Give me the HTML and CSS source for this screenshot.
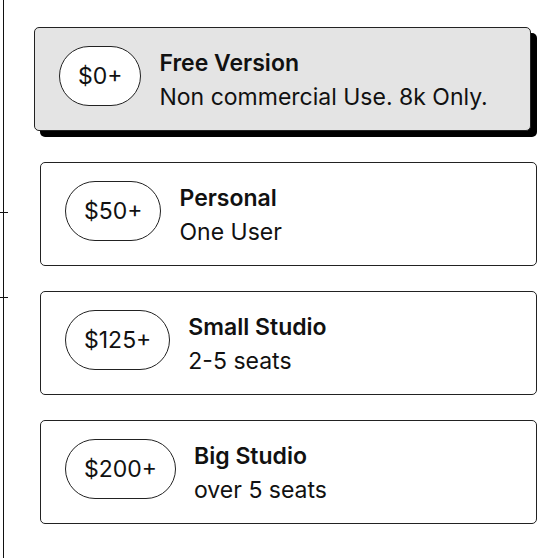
FILE: index.html
```html
<!DOCTYPE html>
<html lang="en">
<head>
  <meta charset="UTF-8" />
  <meta name="viewport" content="width=device-width, initial-scale=1.0"/>
  <title>Pricing</title>
  <link rel="stylesheet" href="styles.css">
</head>
<body>

  <div class="page">
    <div class="rail">
      <span class="tick tick-a"></span>
      <span class="tick tick-b"></span>
    </div>

    <div class="plans">
      <div class="plan selected">
        <div class="price">$0+</div>
        <div class="info">
          <div class="name">Free Version</div>
          <div class="desc">Non commercial Use. 8k Only.</div>
        </div>
      </div>

      <div class="plan">
        <div class="price">$50+</div>
        <div class="info">
          <div class="name">Personal</div>
          <div class="desc">One User</div>
        </div>
      </div>

      <div class="plan">
        <div class="price">$125+</div>
        <div class="info">
          <div class="name">Small Studio</div>
          <div class="desc">2-5 seats</div>
        </div>
      </div>

      <div class="plan">
        <div class="price">$200+</div>
        <div class="info">
          <div class="name">Big Studio</div>
          <div class="desc">over 5 seats</div>
        </div>
      </div>
    </div>
  </div>

</body>
</html>
```

FILE: styles.css
```css
html, body {
  margin: 0;
  padding: 0;
  background: #fff;
  color: #111;
  font-family: Inter, "Liberation Sans", sans-serif;
  height: 100vh;
  overflow: hidden;
}

.page {
  display: flex;
  height: 100%;
}

.rail {
  position: relative;
  width: 36px;
  margin-left: 3px;
  border-left: 1px solid #111;
  flex-shrink: 0;
}

.tick {
  position: absolute;
  left: -4px;
  width: 8px;
  border-top: 1px solid #111;
}

.tick-a { top: 212px; }
.tick-b { top: 297px; }

.plans {
  display: flex;
  flex-direction: column;
  gap: 25px;
  padding-top: 33px;
  width: 497px;
}

.plan {
  display: flex;
  align-items: flex-start;
  gap: 18px;
  padding: 18px 24px 16px;
  border: 1px solid #222;
  border-radius: 5px;
  background: #fff;
}

.plan.selected {
  background: #e4e4e4;
  box-shadow: 6px 6px 0 #000;
  transform: translate(-6px, -6px);
}

.price {
  height: 58px;
  line-height: 58px;
  padding: 0 18px;
  border: 1px solid #222;
  border-radius: 9999px;
  background: #fff;
  font-size: 23px;
  white-space: nowrap;
}

.info {
  line-height: 34px;
  font-size: 23px;
}

.name {
  font-weight: 600;
}
```
